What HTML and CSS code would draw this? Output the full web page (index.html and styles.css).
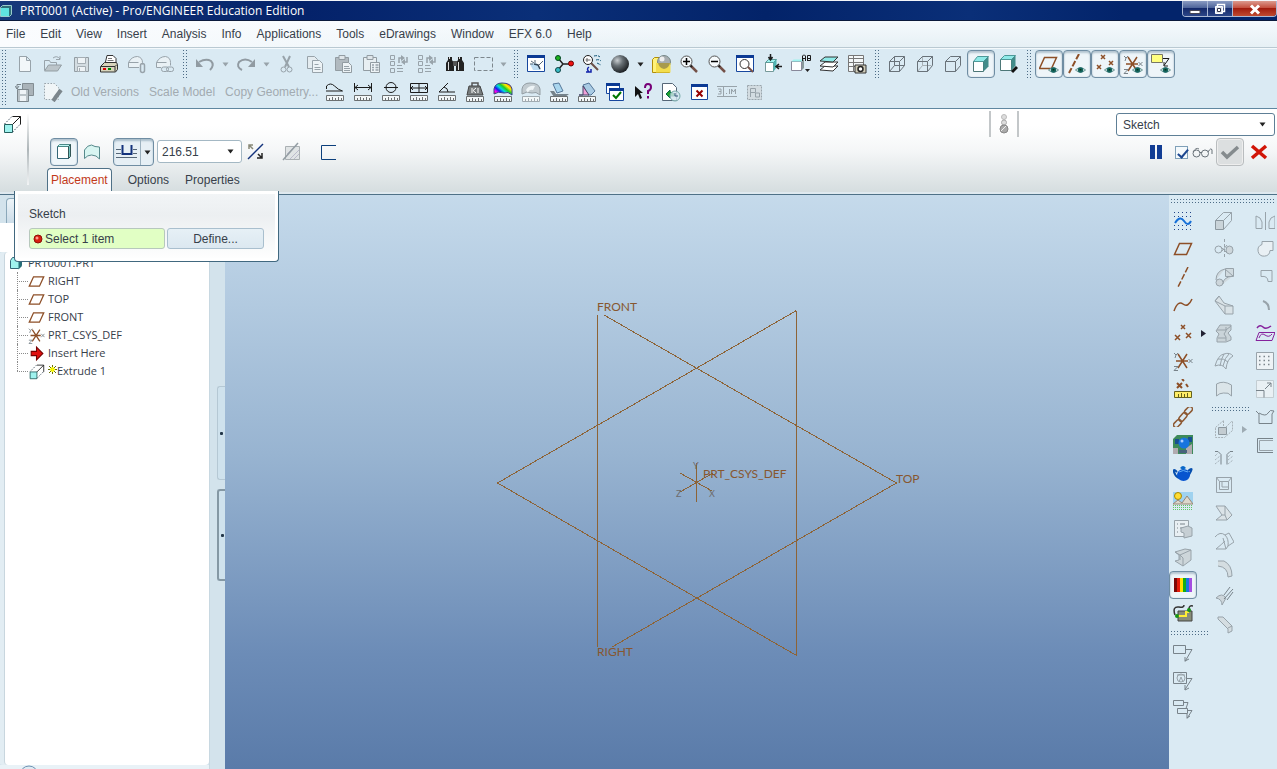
FILE: index.html
```html
<!DOCTYPE html>
<html lang="en">
<head>
<meta charset="utf-8">
<title>PRT0001 (Active) - Pro/ENGINEER Education Edition</title>
<link rel="stylesheet" href="styles.css">
</head>
<body>
<svg class="sprite" aria-hidden="true">
  <symbol id="caret" viewBox="0 0 7 5"><path d="M0.5 0.5h6l-3 4z" fill="currentColor"/></symbol>
  <symbol id="eye" viewBox="0 0 12 8"><path d="M0.5 4Q6-1 11.5 4Q6 9 0.5 4z" fill="#e4efee" stroke="#5d8d8b"/><circle cx="6" cy="4" r="3" fill="#15645f"/><path d="M5 3h2v1.500h-2z" fill="#031"/></symbol>
  <symbol id="ruler" viewBox="0 0 18 6"><path d="M.5.500h17v5h-17z" fill="#f3f7f8" stroke="currentColor"/><path d="M3.500 3v2M6.500 2v3M9.500 3v2M12.500 2v3M15.500 3v2" stroke="currentColor"/></symbol>
  <symbol id="plane" viewBox="0 0 20 20"><path d="M6.500 4.500h12l-5 11h-12z" class="b"/></symbol>
  <symbol id="csys" viewBox="0 0 20 20"><path d="M3 10h12M5 3l9 14M14 3L5 17" class="b"/><path d="M1 2l2 2 2-2M3 4l-1 3M15.500 8l4 4M19.500 8l-4 4M1 15.500h4l-4 4h4" class="g2"/></symbol>
  <symbol id="extrude" viewBox="0 0 20 20"><path d="M2.500 10.500h8v8h-8z" fill="#9ff2ee" stroke="#24605e"/><path d="M2.500 10l8-8M10.500 18l8-8" fill="none" stroke="#345" stroke-dasharray="1.500 1.500"/><path d="M10.500 2.500h8v8M10.500 10.500l8-8" class="k"/></symbol>
  <symbol id="glass" viewBox="0 0 20 20"><path d="M11 11l7 7" stroke="#745047" stroke-width="2.500"/><path d="M11 11l2 2" stroke="#222" stroke-width="2"/><circle cx="7.500" cy="7.500" r="5.500" fill="#f5fafc" stroke="#555"/></symbol>
  <symbol id="regen" viewBox="0 0 20 20"><path d="M1.500 1.500h4v4h-4zM1.500 7.500h4v4h-4zM1.500 14.500h4v4h-4zM8 11.500h5M8 14.500h6M8 17.500h6" class="g"/><path d="M10 9V4h3M15 8h3V3" class="g" stroke-width="1.500"/><path d="M12 1l4 3-4 3zM16 5v6l-4-3z" fill="#98a3aa"/></symbol>
</svg>

<header class="titlebar">
  <svg class="appicon" viewBox="0 0 12 12"><path d="M.5 2.500l2-2h9v9l-2 2h-9z" fill="#2e6f78" stroke="#9cc"/><path d="M1 3h8v8h-8z" fill="#5fe3e0"/></svg>
  <h1>PRT0001 (Active) - Pro/ENGINEER Education Edition</h1>
  <div class="winbtns">
    <button type="button" aria-label="Minimize"><svg viewBox="0 0 16 14"><path d="M3 8.500h10v3h-10z" fill="#fff" stroke="#445"/></svg></button>
    <button type="button" aria-label="Restore"><svg viewBox="0 0 16 14"><path d="M5.500 2.500h7v7h-7z" fill="none" stroke="#fff" stroke-width="1.500"/><path d="M3.500 4.500h7v7h-7z" fill="#dfe5f2" stroke="#fff"/><path d="M5.500 6.500h3v3h-3z" fill="#fff" stroke="#334"/></svg></button>
    <button type="button" class="close" aria-label="Close"><svg viewBox="0 0 16 14"><path d="M4 3.500l8 8M12 3.500l-8 8" stroke="#fff" stroke-width="3"/></svg></button>
  </div>
</header>

<nav class="menubar">
  <button type="button">File</button><button type="button">Edit</button><button type="button">View</button><button type="button">Insert</button><button type="button">Analysis</button><button type="button">Info</button><button type="button">Applications</button><button type="button">Tools</button><button type="button">eDrawings</button><button type="button">Window</button><button type="button">EFX 6.0</button><button type="button">Help</button>
</nav>

<section class="toolbars" aria-label="Toolbars">
  <span class="grip tall"></span>
  <div class="rows">
    <div class="row">
      <button class="tb" aria-label="New"><svg viewBox="0 0 20 20"><path d="M4.500 2.500h7l4 4v11h-11zM11.500 2.500v4h4" class="g" fill="#f2f7f9"/></svg></button>
      <button class="tb" aria-label="Open"><svg viewBox="0 0 20 20"><path d="M1.500 16V6.500h5l1 2h6v3" class="g"/><path d="M1.500 17l4-6h13l-4 6z" fill="#bcc5ca" stroke="#939da3"/><path d="M10 4q4-3 7 1M17 2v3.500h-4" class="g"/></svg></button>
      <button class="tb" aria-label="Save"><svg viewBox="0 0 20 20"><path d="M3.500 3.500h14v14h-14z" fill="#d4dde2" stroke="#939da3"/><path d="M6.500 3.500h8v6h-8zM6.500 12.500h8v5h-8zM8.500 14v3" fill="#eef3f6" stroke="#a5aeb4"/></svg></button>
      <button class="tb" aria-label="Print"><svg viewBox="0 0 20 20"><path d="M6 10l2-8.500h6l3 3V10z" fill="#fff" stroke="#333"/><path d="M9 4.500h4M8.500 6.500h6" stroke="#777"/><path d="M1.500 12.500l4-4h12l1 2v5l-2 2.500h-15z" fill="#d8d5bc" stroke="#333"/><path d="M2 12.500h14l2-2M16 12.500v5" stroke="#333" fill="none"/><path d="M4 14h3v2h-3z" fill="#d00"/><path d="M9 14h3v2h-3z" fill="#080"/></svg></button>
      <button class="tb" aria-label="Attach"><svg viewBox="0 0 20 20"><path d="M12 13.500h-10.500v-5q3-6 9-6 5 1 5 6v2M1.500 8.500h10" class="g" fill="#e9f1f5"/><rect x="13.500" y="9.500" width="4" height="9" rx="2" class="g" stroke-width="1.500"/></svg></button>
      <button class="tb" aria-label="Link"><svg viewBox="0 0 20 20"><path d="M6 13.500h-4.500v-5q3-6 9-6 5 1 5 6v3M1.500 8.500h10" class="g" fill="#e9f1f5"/><rect x="6.500" y="13" width="7" height="4.500" rx="2" class="g"/><rect x="11.500" y="13" width="7" height="4.500" rx="2" class="g"/></svg></button>
      <span class="grip"></span>
      <button class="tb" aria-label="Undo"><svg viewBox="0 0 20 20"><path d="M4 8q7-4 12-1 4 4-1 9" fill="none" stroke="#919ba2" stroke-width="2"/><path d="M1 5v8h7z" fill="#919ba2"/></svg></button>
      <button class="drop" aria-label="Undo list"><svg class="caret"><use href="#caret"/></svg></button>
      <button class="tb" aria-label="Redo"><svg viewBox="0 0 20 20"><path d="M6 16q-6-3-3-8 6-5 13 0" fill="none" stroke="#919ba2" stroke-width="2"/><path d="M19 5v8h-7z" fill="#919ba2"/></svg></button>
      <button class="drop" aria-label="Redo list"><svg class="caret"><use href="#caret"/></svg></button>
      <button class="tb" aria-label="Cut"><svg viewBox="0 0 20 20"><path d="M6 2l6 11M13 2L8 13" class="g" stroke-width="2"/><circle cx="6.500" cy="15.500" r="2.500" class="g"/><circle cx="12.500" cy="15.500" r="2.500" class="g"/></svg></button>
      <button class="tb" aria-label="Copy"><svg viewBox="0 0 20 20"><path d="M2.500 2.500h7l3 3v9h-10z" class="g" fill="#e4ecf0"/><path d="M7.500 6.500h7l3 3v9h-10z" fill="#edf3f6" class="g"/><path d="M9.500 10.500h4M9.500 13.500h6M9.500 15.500h6" class="g"/></svg></button>
      <button class="tb" aria-label="Paste"><svg viewBox="0 0 20 20"><path d="M2.500 3.500h13v13h-13z" fill="#b1bac0" stroke="#929ca2"/><path d="M6 1.500h6v4H6z" fill="#dfe6ea" stroke="#929ca2"/><path d="M9.500 8.500h6l3 3v7h-9z" fill="#edf3f6" stroke="#929ca2"/><path d="M11 12.500h5M11 14.500h6M11 16.500h6" class="g"/></svg></button>
      <button class="tb" aria-label="Paste special"><svg viewBox="0 0 20 20"><path d="M2.500 3.500h13v13h-13z" fill="#e8eff2" stroke="#929ca2"/><path d="M6 1.500h6v4H6z" fill="#dfe6ea" stroke="#929ca2"/><path d="M9.500 8.500h9v10h-9z" fill="#edf3f6" stroke="#929ca2"/><path d="M11 11h2M14.500 11h3M11 13.500h2M14.500 13.500h3M11 16h2M14.500 16h3" class="g" stroke-width="1.500"/></svg></button>
      <button class="tb" aria-label="Regenerate"><svg><use href="#regen"/></svg></button>
      <button class="tb" aria-label="Regenerate manager"><svg><use href="#regen"/></svg></button>
      <button class="tb" aria-label="Find"><svg viewBox="0 0 20 20"><path d="M3 3h4v3l2 3v8H1V9l2-3zM13 3h4v3l2 3v8h-8V9l2-3z" fill="#222"/><path d="M8 7h4v5H8z" fill="#555"/><path d="M3.500 8v8M13.500 8v8M4.500 3v2M14.500 3v2" stroke="#ddd"/></svg></button>
      <button class="tb" aria-label="Select box"><svg viewBox="0 0 20 20"><path d="M1.500 3.500h18v13h-18z" fill="none" stroke="#7d878d" stroke-dasharray="4 2"/></svg></button>
      <button class="drop" aria-label="Selection list"><svg class="caret"><use href="#caret"/></svg></button>
      <span class="grip"></span>
      <button class="tb" aria-label="Repaint"><svg viewBox="0 0 20 20"><path d="M1.500 1.500h17v16h-17z" fill="#fff" stroke="#17479e"/><path d="M1 1h18v3H1z" fill="#0c3a94"/><path d="M4 10l6-1 5 7H7z" fill="#bcdcf3"/><path d="M5 7l3 2M4 10h3M9 6v3M17 7l-5 5" stroke="#567"/><path d="M8 10l4 1 2 4" fill="none" stroke="#345" stroke-width="1.500"/></svg></button>
      <button class="tb" aria-label="Spin center"><svg viewBox="0 0 20 20"><path d="M4 4l5 6-5 6M9 10h8" fill="none" stroke="#222" stroke-width="1.500"/><circle cx="4" cy="4" r="2.500" fill="#1db31d" stroke="#042"/><circle cx="4" cy="16" r="2.500" fill="#38bcc7" stroke="#144"/><circle cx="17" cy="9.500" r="2.500" fill="#e11" stroke="#600"/></svg></button>
      <button class="tb" aria-label="Orient mode"><svg viewBox="0 0 20 20"><circle cx="6" cy="6" r="4.500" class="k" fill="#fff"/><path d="M5 4v4M3.500 6h5" stroke="#666"/><path d="M9 9l7 7" stroke="#6b5048" stroke-width="2"/><path d="M12 2q4-1 6 1M14 6q3-1 5 1M15 9l4 2" stroke="#157" fill="none" stroke-dasharray="3 1"/><path d="M7 13q-3 2 0 5M4 18h5v-3" fill="none" stroke="#12a" stroke-width="1.500"/></svg></button>
      <button class="tb" aria-label="Appearance"><svg viewBox="0 0 20 20"><defs><radialGradient id="ball" cx=".35" cy=".3" r=".75"><stop offset="0" stop-color="#c9ced1"/><stop offset=".4" stop-color="#687075"/><stop offset="1" stop-color="#15191c"/></radialGradient></defs><circle cx="10" cy="10" r="9" fill="url(#ball)"/></svg></button>
      <button class="drop dark" aria-label="Appearance list"><svg class="caret"><use href="#caret"/></svg></button>
      <button class="tb" aria-label="Appearance library"><svg viewBox="0 0 20 20"><path d="M1.500 18.500v-13l2-2h5l1 2h9v13z" fill="#fff27a" stroke="#b18e08"/><circle cx="13" cy="8" r="6.500" fill="#a7adb0" stroke="#788"/><circle cx="11" cy="5" r="2.500" fill="#eee"/><path d="M5 9h14.500v9.500H5z" fill="#f3dd4c"/><path d="M7 9h12q-1 5-6 6-5-1-6-6z" fill="#a89a4c"/></svg></button>
      <button class="tb" aria-label="Zoom in"><svg viewBox="0 0 20 20"><use href="#glass"/><path d="M4 7.500h7M7.500 4v7" stroke="#000" stroke-width="1.500"/></svg></button>
      <button class="tb" aria-label="Zoom out"><svg viewBox="0 0 20 20"><use href="#glass"/><path d="M4 7.500h7" stroke="#000" stroke-width="1.500"/></svg></button>
      <button class="tb" aria-label="Refit"><svg viewBox="0 0 20 20"><path d="M1.500 1.500h17v16h-17z" fill="#fff" stroke="#17479e"/><path d="M1 1h18v3H1z" fill="#0c3a94"/><circle cx="9.500" cy="10" r="4.500" fill="#fff" stroke="#333"/><path d="M13 13l5 5" stroke="#745047" stroke-width="2"/></svg></button>
      <button class="tb" aria-label="Reorient"><svg viewBox="0 0 20 20"><path d="M2.500 8.500h8v9h-8z" fill="#fff" stroke="#799"/><path d="M2.500 8.500l3-3h8l-3 3z" fill="#9ff2ee" stroke="#5b9a98"/><path d="M10.500 8.500l3-3v8l-3 4z" fill="#4eb5b2"/><path d="M7.500 0v5M5.500 3l2 3 2-3M19 12.500h-5M16 10l-3 2.500 3 2.500" class="k" stroke-width="1.500"/></svg></button>
      <button class="tb" aria-label="Saved views"><svg viewBox="0 0 20 20"><path d="M.5 7.500h10v9h-10z" fill="#fff" stroke="#889"/><path d="M.5 7.500l2-2h10l-2 2z" fill="#9ff2ee"/><path d="M11 7l2-2v9l-2 2z" fill="#899"/><path d="M11.500 7V2l1-1h1l1 1v5M11.500 4.500h3M16.500 7V1.500h3v5h-3M16.500 4.500h3" class="k"/><path d="M14 15h5l-2.500 3z" fill="#222"/></svg></button>
      <button class="tb" aria-label="Layers"><svg viewBox="0 0 20 20"><path d="M1 16l5-4h13l-5 5z" fill="#fff" stroke="#333"/><path d="M1 12l5-4h13l-5 5z" fill="#fff" stroke="#333"/><path d="M1 7l5-4h13l-5 5z" fill="#8feae8" stroke="#333"/></svg></button>
      <button class="tb" aria-label="View manager"><svg viewBox="0 0 20 20"><path d="M1.500 1.500h15v16h-15zM1.500 4.500h15M1.500 8.500h15M1.500 12.500h15M6.500 1.500v16" fill="#f4f8f9" stroke="#777"/><path d="M8 11h11v8H8z" fill="#cfccb8" stroke="#333"/><circle cx="13.500" cy="15" r="2.500" fill="#fff" stroke="#222" stroke-width="1.500"/></svg></button>
      <span class="grip"></span>
      <button class="tb" aria-label="Wireframe"><svg viewBox="0 0 20 20"><path d="M2.500 7.500h10v10h-10zM7.500 2.500h10v9h-10zM2.500 7.500l5-5M12.500 7.500l5-5M2.500 17.500l5-6M12.500 17.500l5-6" class="w"/></svg></button>
      <button class="tb" aria-label="Hidden line"><svg viewBox="0 0 20 20"><path d="M7.500 3v8.500h9M2.500 17.500l5-6" stroke="#a7b0b5" fill="none"/><path d="M2.500 7.500h10v10h-10zM7.500 2.500h10v9M2.500 7.500l5-5M7.500 2.500h10M12.500 7.500l5-5M12.500 17.500l5-6" class="w"/></svg></button>
      <button class="tb" aria-label="No hidden"><svg viewBox="0 0 20 20"><path d="M2.500 7.500h10v10h-10zM17.500 2.500v9M2.500 7.500l5-5h10M12.500 7.500l5-5M12.500 17.500l5-6" class="w"/></svg></button>
      <button class="tb on" aria-label="Shading"><svg viewBox="0 0 20 20"><path d="M2.500 7.500h10v10h-10z" fill="#fff" stroke="#4d7777"/><path d="M2.500 7.500l4-5h11l-5 5z" fill="#8feae8" stroke="#4d9999"/><path d="M12.500 7.500l5-5v10l-5 5z" fill="#428c8a"/></svg></button>
      <button class="tb" aria-label="Enhanced realism"><svg viewBox="0 0 20 20"><path d="M1.500 5.500h11v11h-11z" fill="#fff" stroke="#4d7777"/><path d="M1.500 5.500l4-4h11l-4 4z" fill="#8feae8" stroke="#4d9999"/><path d="M12.500 5.500l4-4v10l-4 5z" fill="#428c8a"/><path d="M13 18l5-5" stroke="#111" stroke-width="3"/></svg></button>
      <span class="grip"></span>
      <button class="tb on" aria-label="Datum planes"><svg viewBox="0 0 20 20"><use href="#plane" x="-1" y="-1"/><use href="#eye" x="9" y="12" width="11" height="8"/></svg></button>
      <button class="tb on" aria-label="Datum axes"><svg viewBox="0 0 20 20"><path d="M12 0L2 19" class="b" stroke-width="2" stroke-dasharray="6 2"/><use href="#eye" x="8" y="12" width="11" height="8"/></svg></button>
      <button class="tb on" aria-label="Datum points"><svg viewBox="0 0 20 20"><path d="M6 1l4 4M10 1L6 5M14 7l4 4M18 7l-4 4M2 11l4 4M6 11l-4 4" class="b"/><use href="#eye" x="9" y="12" width="11" height="8"/></svg></button>
      <button class="tb on" aria-label="Coordinate systems"><svg viewBox="0 0 20 20"><use href="#csys"/><use href="#eye" x="9" y="12" width="11" height="8"/></svg></button>
      <button class="tb on" aria-label="Annotations"><svg viewBox="0 0 20 20"><path d="M.5.500h11v8H.5z" fill="#ffff80" stroke="#776"/><path d="M12 4.500h6l-5 7M13 8v4h4" class="k"/><use href="#eye" x="9" y="12" width="11" height="8"/></svg></button>
    </div>
    <div class="row">
      <button class="tb" aria-label="Save versions"><svg viewBox="0 0 20 20"><path d="M7.500 1.500h11v12h-11z" fill="#aab3b9" stroke="#838d93"/><path d="M2.500 7.500h11v12h-11z" fill="#b9c2c7" stroke="#7d878d"/><path d="M5 8h6v4H5zM5 14h6v5H5z" fill="#eef3f6"/><path d="M6 2.500H2v4M0 4l2 3 2-3" class="g2"/></svg></button>
      <button class="tb" aria-label="Edit file"><svg viewBox="0 0 20 20"><path d="M1.500 1.500h10l4 4v12h-14z" fill="#f0f5f7" stroke="#9aa5ac" stroke-dasharray="1.500 1.500"/><path d="M12 16l6-8M10 19l3-4" stroke="#7c868c" stroke-width="4"/></svg></button>
      <button class="textbtn">Old Versions</button><button class="textbtn">Scale Model</button><button class="textbtn last">Copy Geometry...</button>
      <button class="tb m" aria-label="Curve length"><svg viewBox="0 0 20 20"><path d="M1.500 7V4q4-4 8 0t8 5H1" class="k"/><use href="#ruler" x="1" y="13" width="18" height="6"/></svg></button>
      <button class="tb m" aria-label="Distance"><svg viewBox="0 0 20 20"><path d="M1.500 1v9M18.500 1v9M2 5.500h16M5 3L2 5.500 5 8M15 3l3 2.500L15 8" class="k"/><use href="#ruler" x="1" y="13" width="18" height="6"/></svg></button>
      <button class="tb m" aria-label="Diameter"><svg viewBox="0 0 20 20"><circle cx="10" cy="5.500" r="5" class="k"/><path d="M3 5.500h14" class="k"/><use href="#ruler" x="1" y="13" width="18" height="6"/></svg></button>
      <button class="tb m" aria-label="Area"><svg viewBox="0 0 20 20"><path d="M1.500 1.500h17v9h-17zM2 6h16M10 2v8M4 4L2 6l2 2M16 4l2 2-2 2" class="k"/><use href="#ruler" x="1" y="13" width="18" height="6"/></svg></button>
      <button class="tb m" aria-label="Angle"><svg viewBox="0 0 20 20"><path d="M11 1L2 10h16M7 5q4 1 4 5" class="k"/><use href="#ruler" x="1" y="13" width="18" height="6"/></svg></button>
      <button class="tb m" aria-label="Mass"><svg viewBox="0 0 20 20"><path d="M7 5V1h6v4" fill="none" stroke="#555" stroke-width="1.500"/><path d="M4 4h11l3 9H2z" fill="#777c7d" stroke="#444"/><path d="M7 6v5M11 6L8 8.500l3 2.500M13 6v5" stroke="#fff" fill="none"/><use href="#ruler" x="1" y="14" width="18" height="6"/></svg></button>
      <button class="tb m" aria-label="Curvature"><svg viewBox="0 0 20 20"><defs><linearGradient id="heat" x1="0" y1="1" x2="1" y2=".2"><stop offset="0" stop-color="#e00"/><stop offset=".2" stop-color="#f0f"/><stop offset=".35" stop-color="#12e"/><stop offset=".5" stop-color="#0dd"/><stop offset=".65" stop-color="#2c2"/><stop offset=".8" stop-color="#fe0"/><stop offset="1" stop-color="#f40"/></linearGradient></defs><path d="M1 12V7q1-6 8-6 9 0 10 6v6q-4-4-8-2-6-2-10 1z" fill="url(#heat)" stroke="#348"/><use href="#ruler" x="1" y="14" width="18" height="6"/></svg></button>
      <button class="tb dim" aria-label="Section curvature"><svg viewBox="0 0 20 20"><path d="M1 12V7q1-6 8-6 9 0 10 6v6q-4-4-8-2-6-2-10 1z" fill="#c2cbd0" stroke="#939da3"/><path d="M5 8q3-5 9-4l-2 4q-4-1-5 3z" fill="#eef4f6"/><use href="#ruler" x="1" y="14" width="18" height="6"/></svg></button>
      <button class="tb m" aria-label="Offset analysis"><svg viewBox="0 0 20 20"><path d="M4 2l6-1 4 8-6 2z" fill="#a9d6ee" stroke="#579"/><path d="M1 9h4l2 3h13l-4 3H5z" fill="#76838b"/><use href="#ruler" x="1" y="14" width="18" height="6"/></svg></button>
      <button class="tb m" aria-label="Draft analysis"><svg viewBox="0 0 20 20"><path d="M6 3l6-2 6 8-4 4h-3z" fill="#a9cbe4" stroke="#579"/><path d="M2 13h4V4l6 9z" fill="#efa0d8" stroke="#446"/><use href="#ruler" x="1" y="14" width="18" height="6"/></svg></button>
      <button class="tb" aria-label="Model check"><svg viewBox="0 0 20 20"><path d="M1.500 1.500h13v10h-13z" fill="#fff" stroke="#17479e"/><path d="M1 1h14v3H1z" fill="#0c3a94"/><path d="M4.500 6.500h14v12h-14z" fill="#fff" stroke="#17479e"/><path d="M4 6h15v3H4z" fill="#0c3a94"/><path d="M8 13l3 3 5-6" fill="none" stroke="#070" stroke-width="2"/></svg></button>
      <button class="tb" aria-label="Context help"><svg viewBox="0 0 20 20"><path d="M2 4v11l3-3 2 5 2-1-2-5h3z" fill="#111"/><path d="M12 6q0-4 3-4 3 0 3 3t-3 4v3M15 14v2.500" fill="none" stroke="#707" stroke-width="2"/></svg></button>
      <button class="tb" aria-label="Update model"><svg viewBox="0 0 20 20"><path d="M1.500 1.500h10l4 4v13h-14z" fill="#fff" stroke="#567"/><path d="M5 12l4-4v2q4 0 5 4H9v2z" fill="#20a12c" stroke="#064"/><circle cx="14" cy="14" r="5" fill="#cfe5ef" fill-opacity=".8" stroke="#7aa"/><path d="M14 11v3h3" fill="none" stroke="#357"/></svg></button>
      <button class="tb" aria-label="Close window"><svg viewBox="0 0 20 20"><path d="M2.500 2.500h16v15h-16z" fill="#fff" stroke="#17479e"/><path d="M2 2h17v3H2z" fill="#0c3a94"/><path d="M7.500 8.500l6 6M13.500 8.500l-6 6" stroke="#900" stroke-width="2"/></svg></button>
      <button class="tb" aria-label="Dimension"><svg viewBox="0 0 20 20"><path d="M0 4.500h20M0 14.500h20M1 7h3v5H1M2 9.500h2M6.500 5v9M9 11.500h1M12.500 7v5M14.500 12V7l2 3 2-3v5" class="g"/></svg></button>
      <button class="tb" aria-label="Grid"><svg viewBox="0 0 20 20"><path d="M2.500 3.500h14v14h-14z" fill="#d3dce1" stroke="#9aa5ac" stroke-dasharray="2 1"/><path d="M5.500 15V6.500h5v4h-5M10.500 15v-4h4v4z" class="g"/></svg></button>
    </div>
  </div>
</section>

<section class="dashboard">
  <div class="feature"><svg class="ico"><use href="#extrude"/></svg></div>
  <div class="controls">
    <div class="options">
      <button class="tb on" aria-label="Solid"><svg viewBox="0 0 20 20"><path d="M3.500 4.500h11v12h-11z" fill="#fff" stroke="#367"/><path d="M3.500 4.500l2-2h11l-2 2z" fill="#bff6f3" stroke="#4a8886"/><path d="M14.500 4.500l2-2v12l-2 2z" fill="#74c4c0" stroke="#355"/></svg></button>
      <button class="tb" aria-label="Surface"><svg viewBox="0 0 20 20"><path d="M2.500 16.500V8q3-5 7-5 3 2 8 2v12q-3-4-8-4-4 0-7 3.500z" fill="#d8f5f1" stroke="#578a8c"/></svg></button>
      <div class="split">
        <button class="main" aria-label="Symmetric depth"><svg viewBox="0 0 22 20"><path d="M0 7.500h5M17 7.500h4M0 11.500h5M17 11.500h4M0 15.500h21" stroke="#567"/><path d="M6.500 3v9h9V3" fill="none" stroke="#13327c" stroke-width="2"/></svg></button>
        <button class="arrow" aria-label="Depth options"><svg class="caret"><use href="#caret"/></svg></button>
      </div>
      <div class="depth"><input type="text" value="216.51" aria-label="Depth"><button aria-label="Recent values"><svg class="caret"><use href="#caret"/></svg></button></div>
      <button class="tb" aria-label="Flip direction"><svg viewBox="0 0 20 20"><path d="M2 17L17 2" stroke="#13327c" stroke-width="1.500"/><path d="M3 3l4 4M3 7V3h4" fill="none" stroke="#887" stroke-width="1.500"/><path d="M12 12l4 4M16 11v5h-5" fill="none" stroke="#222" stroke-width="1.500"/></svg></button>
      <button class="tb gap" aria-label="Remove material"><svg viewBox="0 0 20 20"><path d="M3.500 4.500h14v13h-14z" fill="#e0e4e5" stroke="#aab0b3"/><path d="M8 17l9-9M12 17l5-5M5 12l7-7" stroke="#bbc"/><path d="M1 18L16 1" stroke="#939da3" stroke-width="1.500"/></svg></button>
      <button class="tb gap" aria-label="Thicken sketch"><svg viewBox="0 0 20 20"><path d="M18 3.500H3.500v14H18" fill="none" stroke="#0b3f7c"/></svg></button>
    </div>
    <div class="tabs" role="tablist">
      <button role="tab" class="active" aria-selected="true">Placement</button>
      <button role="tab">Options</button>
      <button role="tab">Properties</button>
    </div>
    <div class="popup">
      <label for="sketch-item">Sketch</label>
      <div class="pick">
        <div class="collector"><svg viewBox="0 0 10 10"><circle cx="5" cy="5" r="4" fill="#d91e10" stroke="#8d1208"/><circle cx="4" cy="4" r="1.500" fill="#ff9c8c"/></svg><input id="sketch-item" type="text" value="Select 1 item" readonly></div>
        <button>Define...</button>
      </div>
    </div>
  </div>
  <div class="side">
    <div class="filterline">
      <div class="status"><svg viewBox="0 0 12 20"><circle cx="6" cy="3" r="2.500" fill="#ddd" stroke="#bbb"/><circle cx="6" cy="8.500" r="2.500" fill="#ddd" stroke="#aaa"/><circle cx="6" cy="15" r="4" fill="#aaa" stroke="#888"/><path d="M3 17l5-5" stroke="#eee"/></svg></div>
      <div class="filter"><select aria-label="Selection filter"><option>Sketch</option></select><svg class="caret"><use href="#caret"/></svg></div>
    </div>
    <div class="actions">
      <button class="tb" aria-label="Pause"><svg viewBox="0 0 20 20"><path d="M4 3h5v14H4zM11 3h5v14h-5z" fill="#123d94"/></svg></button>
      <label class="preview"><input type="checkbox" checked aria-label="Preview"><svg viewBox="0 0 21 12"><circle cx="4.500" cy="7.500" r="3.500" class="w"/><circle cx="13" cy="7.500" r="3.500" class="w"/><path d="M8 7q1-2 2 0M1 6q3-5 6-3M16 6q3-5 4-2v4" class="w"/></svg></label>
      <button class="tb ok" aria-label="Accept"><svg viewBox="0 0 20 20"><path d="M2 10l5 5L18 5" fill="none" stroke="#858b8e" stroke-width="3.500"/></svg></button>
      <button class="tb" aria-label="Cancel"><svg viewBox="0 0 20 20"><path d="M3 4l14 12M17 4L3 16" stroke="#d11507" stroke-width="3.500"/></svg></button>
    </div>
  </div>
</section>

<main class="work">
  <aside class="navigator">
    <div class="navtabs"><span></span></div>
    <div class="navhead"></div>
    <div class="tree">
      <div class="root"><svg viewBox="0 0 14 14"><path d="M1.500 4.500l2-3h9v8l-3 3h-8z" fill="#9ff2ee" stroke="#367"/><path d="M9.500 4.500l3-3v9l-3 3z" fill="#256f78"/></svg>PRT0001.PRT</div>
      <ul>
        <li><svg><use href="#plane"/></svg>RIGHT</li>
        <li><svg><use href="#plane"/></svg>TOP</li>
        <li><svg><use href="#plane"/></svg>FRONT</li>
        <li><svg><use href="#csys"/></svg>PRT_CSYS_DEF</li>
        <li><svg viewBox="0 0 16 16"><path d="M3 6h5V2l6 6-6 6v-4H3z" fill="#e01010" stroke="#700"/></svg>Insert Here</li>
        <li><svg><use href="#extrude"/></svg><svg class="star" viewBox="0 0 9 9"><path d="M0 4.500h9M4.500 0v9M1 1l7 7M8 1L1 8" stroke="#6b7300"/><path d="M2 4.500h5M4.500 2v5" stroke="#ff0" stroke-width="2"/></svg>Extrude 1</li>
      </ul>
    </div>
    <div class="navfoot"><svg viewBox="0 0 20 20"><circle cx="10" cy="10" r="9" fill="#dfeaf2" stroke="#6f93b3"/></svg></div>
  </aside>
  <div class="sash"><button aria-label="Collapse navigator"></button><button class="in" aria-label="Collapse browser"></button></div>
  <div class="canvas">
    <svg viewBox="225 195 944 574" role="img" aria-label="Default datum planes">
      <g class="datum">
        <path d="M597.500 315V647M796.500 310.500V655.500M796.500 310.500L497.500 483L796.500 655.500M604 315L896.500 483L612 647"/>
        <path d="M696.500 463V502M680 473l32 18M713 473l-33 19"/>
      </g>
      <g class="names"><text x="597" y="311">FRONT</text><text x="597" y="656">RIGHT</text><text x="896" y="483">TOP</text><text x="703" y="478">PRT_CSYS_DEF</text></g>
      <g class="axes"><text x="693" y="469">Y</text><text x="676" y="497">Z</text><text x="709" y="497">X</text></g>
    </svg>
  </div>
  <aside class="features" aria-label="Feature tools">
    <span class="hgrip"></span>
    <div class="cols">
      <div class="col">
        <button class="tb" aria-label="Sketch"><svg viewBox="0 0 20 20"><path d="M1 1.500h18M1 5.500h18M1 14.500h18M1 18.500h18" stroke="#248" stroke-dasharray="1 3"/><path d="M2 12q5-8 9-2t7 0" fill="none" stroke="#1670d8" stroke-width="2"/></svg></button>
        <button class="tb" aria-label="Plane"><svg><use href="#plane"/></svg></button>
        <button class="tb" aria-label="Axis"><svg viewBox="0 0 20 20"><path d="M15 0L5 20" class="b" stroke-dasharray="6 2"/></svg></button>
        <button class="tb" aria-label="Curve"><svg viewBox="0 0 20 20"><path d="M1 16q4-11 9-7t9-5" class="b"/></svg></button>
        <div class="pair"><button class="tb" aria-label="Point"><svg viewBox="0 0 20 20"><path d="M8 2l4 4M12 2L8 6M13 10l5 5M18 10l-5 5M2 12l5 5M7 12l-5 5" class="b"/></svg></button><button class="fly" aria-label="Point types"><svg viewBox="0 0 5 7"><path d="M0 0l5 3.500L0 7z"/></svg></button></div>
        <button class="tb" aria-label="Coordinate system"><svg><use href="#csys"/></svg></button>
        <button class="tb" aria-label="Analysis"><svg viewBox="0 0 20 20"><path d="M4 4l5 5M9 4L4 9M9 0l2 2M13 5l2 3" class="b" stroke-width="2"/><path d="M1.500 12.500h17v6h-17z" fill="#ffee68" stroke="#65611c"/><path d="M5.500 15v3M8.500 14v4M11.500 15v3M14.500 14v4" stroke="#65611c"/></svg></button>
        <button class="tb" aria-label="Reference"><svg viewBox="0 0 20 20"><g fill="none" stroke="#8d5831" stroke-width="1.500"><rect x="13" y="-1" width="5" height="9" rx="2.500" transform="rotate(45 15.500 3.500)"/><rect x="7.500" y="5" width="5" height="10" rx="2.500" transform="rotate(40 10 10)"/><rect x="2" y="12" width="5" height="9" rx="2.500" transform="rotate(45 4.500 16.500)"/></g></svg></button>
        <button class="tb" aria-label="Render"><svg viewBox="0 0 20 20"><path d="M0 4l4-4h16v19H0z" fill="#3d8a5a"/><path d="M0 13h5v6H0zM13 13l6-4v10h-6z" fill="#b1abb0"/><path d="M15 2h4v5h-4zM2 4h4v5H2z" fill="#174f91"/><path d="M6 15h8v3H6z" fill="#48627c"/><circle cx="11" cy="8" r="5.500" fill="#1774de"/><circle cx="9" cy="6" r="1.500" fill="#acf"/></svg></button>
        <button class="tb" aria-label="Teapot"><svg viewBox="0 0 20 20"><path d="M4 9Q0 5 1 9t5 6M15 8q5-4 3 0t-3 5" fill="none" stroke="#064fae" stroke-width="2"/><ellipse cx="10.500" cy="12" rx="6.500" ry="6" fill="#0754cf"/><path d="M7 5q3-4 6 0l-3 2z" fill="#0a68c9"/><path d="M6 9q4-3 9 0" fill="none" stroke="#62b0f7"/></svg></button>
        <button class="tb" aria-label="Scene"><svg viewBox="0 0 20 20"><path d="M0 1h20v11H0z" fill="#9fd2ef"/><circle cx="5" cy="5" r="3.500" fill="#fd3" stroke="#a80"/><path d="M0 13l5-4 4 3 5-7 6 8z" fill="#ded8cc" stroke="#987"/><path d="M0 14.500h20M0 16.500h20M0 18.500h20" stroke="#64c867" stroke-dasharray="1 1"/></svg></button>
        <button class="tb" aria-label="Mold"><svg viewBox="0 0 20 20"><path d="M1.500 1.500h14v16h-14z" fill="#e8eff3" class="g"/><path d="M4 5h1M7 5h5M4 9h1M7 9h4M4 13h1" class="g2"/><path d="M8 9l7-2 4 2v8l-8 2v-5l-3-1z" fill="#c6cfd4" class="g"/></svg></button>
        <button class="tb" aria-label="Cavity"><svg viewBox="0 0 20 20"><path d="M2 5l10-3 6 1v10l-8 6-8-5 4-1V8z" fill="#cdd6da" class="g"/><path d="M2 5l5 3 11-5M7 8l3 3v8M7 8v5" class="g"/></svg></button>
        <button class="tb on" aria-label="Color"><svg viewBox="0 0 20 20"><path d="M1 3h3v14H1z" fill="#7c0909"/><path d="M4 3h3v14H4z" fill="#e51b0b"/><path d="M7 3h3v14H7z" fill="#ffe000"/><path d="M10 3h3v14h-3z" fill="#12ad17"/><path d="M13 3h3v14h-3z" fill="#1776df"/><path d="M16 3h3v14h-3z" fill="#a54ee0"/></svg></button>
        <button class="tb" aria-label="Cabling"><svg viewBox="0 0 20 20"><path d="M5 8h14v10H5z" fill="#888d79" stroke="#444"/><path d="M2 12q-3-9 4-8 5 1 5-2M16 6q0-4 4-3" fill="none" stroke="#333" stroke-width="1.500"/><path d="M4 13h9V9h3" fill="none" stroke="#ffee35" stroke-width="2"/><circle cx="4" cy="13" r="2" fill="#169517"/><circle cx="16" cy="7" r="2" fill="#169517"/></svg></button>
        <span class="hgrip"></span>
        <button class="tb" aria-label="Note"><svg viewBox="0 0 20 20"><path d="M.5 2.500h12v8H.5zM13 6.500h6l-7 12M12 14v4l4-2" class="g2"/></svg></button>
        <button class="tb" aria-label="Symbol note"><svg viewBox="0 0 20 20"><path d="M.5 1.500h13v11H.5zM14 7.500h5l-7 11M12 14v5l4-2" class="g2"/><circle cx="8" cy="7" r="4" class="g"/><path d="M4 4h8M6 11l2-5 2 5" class="g"/></svg></button>
        <button class="tb" aria-label="Linked notes"><svg viewBox="0 0 20 20"><path d="M.5 1.500h10v5H.5zM4.500 9.500h10v5h-10zM11 3.500h4l-2 6M15 11.500h4l-5 8M14 15v4l3-2" class="g2"/></svg></button>
      </div>
      <div class="col">
        <button class="tb" aria-label="Extrude"><svg viewBox="0 0 20 20"><path d="M1.500 9.500h8v9h-8z" fill="#cad4d9" stroke="#8c989f"/><path d="M1.500 9.500l8-8h8l-8 8M17.500 1.500v8l-8 9" class="g"/></svg></button>
        <button class="tb" aria-label="Revolve"><svg viewBox="0 0 20 20"><circle cx="4.500" cy="10.500" r="3.500" class="g"/><ellipse cx="15.500" cy="11" rx="3.500" ry="4" class="g" fill="#cdd6db"/><path d="M6 7l7 7M8 12l5-6" class="g"/><path d="M10.500 0v20" stroke="#98a3aa" stroke-dasharray="3 2"/></svg></button>
        <button class="tb" aria-label="Sweep"><svg viewBox="0 0 20 20"><path d="M11.500 1.500h8v8h-8zM2 13Q2 4 11 2M9 17q0-7 10-8M11 2l8 7" class="g" fill="#d0dadf"/><circle cx="5.500" cy="15.500" r="3.500" class="g" fill="#cdd6db"/></svg></button>
        <button class="tb" aria-label="Blend"><svg viewBox="0 0 20 20"><path d="M5 1l5 7 9 3v8h-8L1 6z" class="g" fill="#d9e2e6"/><path d="M1 6l4-5M11 19v-8h8M1 6l10 5" class="g"/></svg></button>
        <button class="tb" aria-label="Swept blend"><svg viewBox="0 0 20 20"><path d="M6 2h11v5l-3 3 3 4v3l-5 2H3v-4l2-4-3-3z" class="g" fill="#cad4d9"/><path d="M12 4v4l-2 3 2 3v4M3 7h9l5-4M4 15h8" class="g"/></svg></button>
        <button class="tb" aria-label="Boundary"><svg viewBox="0 0 20 20"><path d="M1 15Q4 4 10 3q6-2 9 2-6 3-7 13-4-6-11-3zM4 8q6-1 10 3M10 3q-3 5-4 12M15 3q-4 3-6 12" class="g"/></svg></button>
        <button class="tb" aria-label="Style"><svg viewBox="0 0 20 20"><path d="M2.500 17V5q7-4 15 1v11q-3-4-8-3-4 0-7 3z" class="g" fill="#dbe5e9"/></svg></button>
        <span class="hgrip"></span>
        <div class="pair"><button class="tb" aria-label="Hole"><svg viewBox="0 0 20 20"><path d="M1.500 8.500l8-7M18.500 2.500v9l-8 7h-9v-10M9.500 2v6M12 8l6-6" stroke="#a7b1b7" fill="none" stroke-dasharray="2 1"/><path d="M4.500 8.500h8v7h-8z" fill="#c3ccd1" stroke="#8c989f"/></svg></button><button class="fly off" aria-label="Hole types"><svg viewBox="0 0 5 7"><path d="M0 0l5 3.500L0 7z"/></svg></button></div>
        <button class="tb" aria-label="Slot"><svg viewBox="0 0 20 20"><path d="M1 4.500h3l3 3v10M19 4.500h-3l-3 3v10" class="g2"/><path d="M1 9l3-3M1 13l5-4M1 17l5-4M14 10l3-3M14 13l5-4M14 17l5-4" class="g" stroke-dasharray="1 1"/></svg></button>
        <button class="tb" aria-label="Shell"><svg viewBox="0 0 20 20"><path d="M2.500 2.500h15v15h-15zM5.500 6.500h9v8h-9zM8 7v5h6M2.500 2.500l3 4M17.500 2.500l-3 4" class="g"/></svg></button>
        <button class="tb" aria-label="Rib"><svg viewBox="0 0 20 20"><path d="M2 3h9l7 9-5 5H2l6-5z" class="g" fill="#dbe3e7"/><path d="M8 12h3l2 5M11 3v9" class="g"/></svg></button>
        <button class="tb" aria-label="Draft"><svg viewBox="0 0 20 20"><path d="M1 6q5-6 10-2l4-2 5 9-6 4-2 3H2q6-5 9-8M11 4q4 4 3 11M9 7l3 11" class="g"/></svg></button>
        <button class="tb" aria-label="Round"><svg viewBox="0 0 20 20"><path d="M4 2h6q8 4 8 15l-4 1Q14 8 4 7" class="g" fill="#d4dde1"/></svg></button>
        <button class="tb" aria-label="Edge edit"><svg viewBox="0 0 20 20"><path d="M2 11q6-6 10 0l-4 7q0-6-6-7z" class="g" fill="#cdd6db"/><path d="M10 12l9-10M10 8l6-8M13 13l6-8" class="g2"/></svg></button>
        <button class="tb" aria-label="Chamfer"><svg viewBox="0 0 20 20"><path d="M4 2h5l9 9v5l-4 2v-4L4 4z" class="g" fill="#d4dde1"/><path d="M14 13l4-2" class="g"/></svg></button>
      </div>
      <div class="col">
        <button class="tb" aria-label="Mirror"><svg viewBox="0 0 20 20"><path d="M10.500 1v18M1 17.500V5q5 1 6 6v6.500zM20 17.500V5q-5 1-6 6v6.500z" class="g"/></svg></button>
        <button class="tb" aria-label="Merge"><svg viewBox="0 0 20 20"><path d="M7 2.500h11v9h-3a6 6 0 1 1-8-6z" class="g" fill="#e9f0f4"/></svg></button>
        <button class="tb" aria-label="Trim"><svg viewBox="0 0 20 20"><path d="M6 3.500h11v11h-4q0-6-7-5z" class="g"/></svg></button>
        <button class="tb" aria-label="Extend"><svg viewBox="0 0 20 20"><path d="M8 6q6 2 6 9" class="g" stroke-width="2"/></svg></button>
        <button class="tb" aria-label="Project"><svg viewBox="0 0 20 20"><path d="M2 5q3-4 6-1t8-1" fill="none" stroke="#85219c" stroke-width="1.500"/><path d="M4 9.500h16l-3 8H1zM4 15q2-6 6-3t7-1" fill="none" stroke="#85219c"/></svg></button>
        <button class="tb" aria-label="Pattern"><svg viewBox="0 0 20 20"><path d="M1.500 1.500h17v17h-17z" class="g" fill="#eef3f6"/><path d="M4 5.500h13M4 9.500h13M4 13.500h13" stroke="#7c868c" stroke-dasharray="1.500 3" stroke-width="1.500"/></svg></button>
        <button class="tb" aria-label="Offset"><svg viewBox="0 0 20 20"><path d="M1.500 1.500h17v17h-17z" fill="#e9f0f4" stroke="#c3cdd2"/><path d="M1 11.500h8v7M10 10l6-6M12 4h4v4" class="g2"/></svg></button>
        <button class="tb" aria-label="Fill"><svg viewBox="0 0 20 20"><path d="M1 4l3 3v9.500h13V7l2-3q-4-2-6 2t-9 0" class="g2"/></svg></button>
        <button class="tb" aria-label="Thicken"><svg viewBox="0 0 20 20"><path d="M18 3.500H2.500v14H18" class="g2"/><path d="M18 5.500H4.500v10H18" class="g"/></svg></button>
      </div>
    </div>
  </aside>
</main>
</body>
</html>
```
FILE: styles.css
```css
* { box-sizing: border-box; }
body {
  margin: 0;
  height: 100vh;
  display: flex;
  flex-direction: column;
  overflow: hidden;
  background: #daeaf3;
  color: #37404a;
  font: 12px/16px "Liberation Sans", Arial, sans-serif;
}
button, input, select { font: inherit; color: inherit; margin: 0; }
button { border: 0; padding: 0; background: none; white-space: nowrap; }
.sprite { position: absolute; width: 0; height: 0; }

.g { stroke: #98a3aa; }
.g:not([fill]) { fill: none; }
.g2 { fill: none; stroke: #78838a; }
.k { stroke: #1c1c1c; }
.k:not([fill]) { fill: none; }
.w { fill: none; stroke: #697279; }
.b { fill: none; stroke: #8d4f27; }
.b:not([stroke-width]) { stroke-width: 1.5; }

/* Title bar */
.titlebar {
  flex: none;
  display: flex;
  align-items: center;
  height: 21px;
  border-top: 1px solid #f4f6fa;
  border-bottom: 1px solid #0a1a3c;
  background: linear-gradient(90deg, #17397a 0, #04226a 24%, #0a2f78 42%, #032369 60%, #0a2f78 76%, #03246b 88%);
  color: #fff;
}
.appicon { width: 12px; height: 12px; }
.titlebar h1 { flex: 1; margin: 0 0 0 8px; font: 12px/18px "Open Sans", sans-serif; }
.winbtns {
  display: flex;
  align-self: flex-start;
  height: 16px;
  border: 1px solid #aab8d4;
  border-top: 0;
  border-radius: 0 0 4px 4px;
  overflow: hidden;
}
.winbtns button {
  width: 25px;
  height: 15px;
  border-right: 1px solid #aab8d4;
  background: linear-gradient(#8a9bc2, #4e649a 45%, #14296a 50%, #2c4688);
}
.winbtns .close { width: 43px; border: 0; background: linear-gradient(#dc9a8e, #c4503f 45%, #a11d0f 50%, #c04a30); }
.winbtns svg { display: block; width: 16px; height: 14px; margin: auto; }

/* Menu */
.menubar {
  flex: none;
  display: flex;
  gap: 15px;
  height: 27px;
  padding: 0 6px;
  background: linear-gradient(90deg, #fafcfe, transparent 60%), linear-gradient(#f5fafd, #e6f0f5);
  border-bottom: 1px solid #b9c9d2;
}

/* Toolbars */
.toolbars {
  flex: none;
  display: flex;
  height: 61px;
  padding-top: 1px;
  border-top: 1px solid #f4f9fc;
  border-bottom: 1px solid #5f87a0;
}
.row { display: flex; height: 28px; }
.tb {
  flex: none;
  display: grid;
  place-items: center;
  width: 28px;
  height: 28px;
  border: 1px solid transparent;
  border-radius: 4px;
}
.tb svg, .ico { display: block; width: 20px; height: 20px; }
.tb.on { border-color: #6f8da3; background: #eef5f9; box-shadow: inset 0 2px 2px #b4c5d0, inset 0 0 1px #8ba6b8; }
.tb.m { color: #6b7072; }
.tb.dim { color: #a1abb1; }
.caret { display: block; width: 7px; height: 5px; }
.drop { display: grid; place-items: center; flex: none; width: 13px; color: #98a3aa; }
.dark { color: #222; }
.grip { flex: none; display: grid; place-items: center; width: 12px; height: 28px; }
.grip::before, .hgrip::before {
  content: "";
  background: conic-gradient(from 270deg at 1px 1px, #4d6c86 90deg, transparent 0) 0 0 / 3px 3px;
}
.grip::before { width: 4px; height: 28px; }
.grip.tall { width: 11px; height: 56px; padding-right: 3px; }
.grip.tall::before { height: 56px; }
.textbtn { margin-left: 4px; padding-right: 6px; color: #a2abb1; }
.textbtn.last { padding-right: 3px; }

/* Dashboard */
.dashboard {
  flex: none;
  position: relative;
  z-index: 1;
  display: flex;
  height: 86px;
  border-bottom: 1px solid #4f7187;
  box-shadow: inset 0 -2px #dfe9ef;
  background: linear-gradient(#fff 20%, #f4f6f7 50%, #d4dcde);
}
.feature {
  width: 29px;
  margin: 5px 0 9px;
  border-right: 2px solid;
  border-image: linear-gradient(#fff, #aeb6b9 50%, #f4f6f7) 1;
  padding-left: 2px;
}
.controls { flex: 1; padding: 29px 0 0 21px; }
.options { display: flex; height: 28px; }
.split {
  display: flex;
  width: 41px;
  margin: 0 3px 0 7px;
  border: 1px solid #6f8da3;
  border-radius: 4px;
  background: #e6eff5;
  box-shadow: inset 0 2px 2px #a9bdca;
}
.split .main { width: 27px; padding-left: 2px; border-right: 1px solid #9cb1bf; }
.split .main svg { display: block; width: 22px; height: 20px; }
.arrow, .depth button { flex: 1; display: grid; place-items: center; color: #222; }
.depth {
  display: flex;
  width: 85px;
  height: 23px;
  margin: 2px 0 0;
  border: 1px solid #a4b8c4;
  border-radius: 3px;
  background: #fff;
}
.depth input { width: 62px; border: 0; padding: 0 4px; background: none; }
.tb.gap { margin-left: 8px; }
.tabs { display: flex; height: 25px; gap: 16px; padding: 2px 0 0; }
.tabs button { height: 24px; }
.tabs .active {
  height: 25px;
  margin: 0 0 0 -3px;
  padding: 0 3px 2px;
  border: 1px solid #4f7187;
  border-bottom: 0;
  border-radius: 4px 4px 0 0;
  background: linear-gradient(#fff, #f6f8fa);
  color: #c2391a;
}
.popup {
  position: absolute;
  left: 14px;
  top: 82px;
  width: 265px;
  padding: 15px 14px 12px;
  border: 1px solid #41687f;
  border-top: 0;
  border-radius: 0 0 4px 4px;
  background: linear-gradient(#f2f5f7, #eceff1 35%, #fff);
  box-shadow: inset 0 0 0 3px #fff;
}
.pick { display: flex; gap: 2px; margin-top: 6px; }
.pick > * { height: 21px; border: 1px solid #b7c8bd; border-radius: 3px; }
.collector { flex: 1; min-width: 0; display: flex; align-items: center; gap: 2px; padding: 0 3px; background: #e1ffc4; }
.collector svg { flex: none; width: 10px; height: 10px; }
.collector input { flex: 1; min-width: 0; border: 0; padding: 0; background: none; }
.pick button { flex: none; width: 97px; border-color: #a9bfce; background: linear-gradient(#e6f0f6, #dce8f0); }

.side { padding: 2px 2px 0 0; }
.filterline { display: flex; justify-content: flex-end; height: 26px; }
.status { width: 30px; margin-right: 97px; padding: 3px 7px 0; border: solid #c3c7c9; border-width: 0 2px; }
.status svg { display: block; width: 12px; height: 20px; }
.filter { position: relative; width: 159px; padding-top: 2px; }
.filter select {
  appearance: none;
  width: 100%;
  height: 23px;
  padding: 0 6px;
  border: 1px solid #5e7f96;
  border-radius: 3px;
  background: #fff;
}
.filter .caret { position: absolute; right: 9px; top: 11px; color: #222; }
.actions { display: flex; justify-content: flex-end; align-items: center; gap: 1px; padding: 1px 2px 0 0; }
.preview { display: flex; align-items: center; gap: 4px; width: 44px; padding-left: 4px; }
.preview svg { width: 21px; height: 12px; }
.preview input { appearance: none; position: relative; width: 13px; height: 13px; border: 1px solid #7fa0b8; background: #f4f9fc; }
.preview input:checked::before {
  content: "";
  position: absolute;
  left: 4px;
  top: 0;
  width: 4px;
  height: 9px;
  border: solid #1b4690;
  border-width: 0 2px 2px 0;
  transform: rotate(40deg);
}
.ok { border-color: #b9bdbf; background: #dcdfe0; box-shadow: inset 0 0 0 1px #eee; }

/* Work area */
.work { flex: 1; min-height: 0; display: grid; grid-template-columns: 209px 16px 1fr 108px; }
.navigator { display: flex; flex-direction: column; background: #d3e3ec; min-height: 0; font: 11px/18px "Open Sans", sans-serif; }
.navtabs { height: 28px; padding: 3px 6px 0; }
.navtabs span { display: block; width: 40px; height: 25px; border: 1px solid #8ba8ba; border-bottom: 0; border-radius: 4px 0 0; background: linear-gradient(#eef5f9, #cbdce8); }
.navhead { height: 29px; background: #fff; }
.tree { flex: 1; padding: 2px 0 0 4px; background: #fff; border-left: 1px solid #c8d6de; box-shadow: -5px 0 #e2edf3; margin-left: 4px; border-radius: 4px 0 4px 4px; }
.root { display: flex; gap: 5px; align-items: center; height: 18px; }
.root svg { width: 14px; height: 14px; }
.tree ul { list-style: none; margin: 0; padding: 0 0 0 8px; }
.tree li { position: relative; display: flex; align-items: center; height: 18px; }
.tree li::before { content: ""; width: 11px; border-top: 1px dotted #8b8b8b; }
.tree li::after { content: ""; position: absolute; left: 0; top: 0; bottom: 0; border-left: 1px dotted #8b8b8b; }
.tree li:last-child::after { bottom: 50%; }
.tree li svg { width: 17px; height: 17px; margin-right: 3px; }
.tree li .star { width: 9px; height: 9px; margin: 0 0 4px; }
.navfoot { height: 4px; padding-left: 19px; overflow: hidden; background: #e9f2f7; }
.navfoot svg { width: 20px; height: 20px; display: block; }
.sash {
  display: flex;
  flex-direction: column;
  align-items: flex-end;
  justify-content: center;
  gap: 9px;
  padding-top: 3px;
  background: #d3e3ec;
  border-left: 1px solid #c8d8e1;
}
.sash button { width: 8px; height: 94px; border: 1px solid #b5c8d4; border-right: 0; border-radius: 3px 0 0 3px; background: #cfe2ed; }
.sash .in { height: 92px; border: 2px solid #8598a4; border-right: 0; }
.sash button::before { content: ""; display: block; width: 3px; height: 3px; margin: 0 auto; background: #223647; border-radius: 1px; }
.canvas { min-width: 0; min-height: 0; background: linear-gradient(#c5daeb, #98b4d1 45%, #6c8cb7 80%, #5a7ba9); }
.canvas svg { display: block; width: 100%; height: 100%; }
.datum { fill: none; stroke: #8d6336; shape-rendering: crispEdges; }
.names { font: 12px Lato, sans-serif; fill: #87572f; }
.axes { font: 9px Lato, sans-serif; fill: #6d6b6c; }
.features { background: #daeaf3; overflow: hidden; }
.hgrip { display: grid; place-items: center stretch; height: 12px; padding: 0 2px; }
.hgrip::before { height: 4px; }
.cols { display: grid; grid-template-columns: 41px 41px 26px; }
.pair { display: flex; }
.fly { width: 13px; display: grid; place-items: center; }
.fly svg { width: 5px; height: 7px; fill: #223; }
.fly.off svg { fill: #9eabb3; }
```
